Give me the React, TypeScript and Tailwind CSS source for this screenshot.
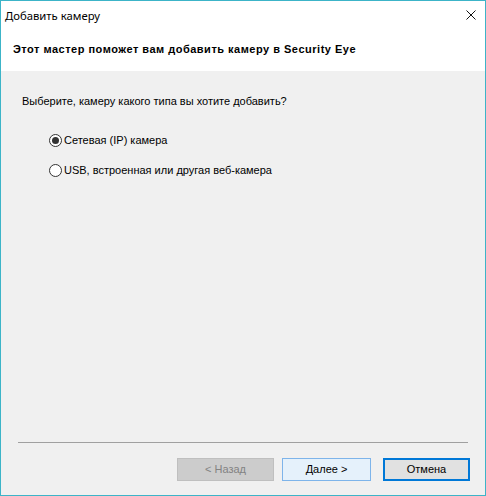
import { useState } from "react";

const ui = { fontFamily: '"Liberation Sans", Arial, sans-serif' };
const title = { fontFamily: '"Segoe UI", "Noto Sans", "Open Sans", sans-serif' };

function Radio({ checked, label, onClick }: { checked: boolean; label: string; onClick: () => void }) {
  return (
    <button type="button" onClick={onClick} className="flex items-center gap-[2px] h-[14px] text-left">
      <span className="flex h-[13px] w-[13px] items-center justify-center rounded-full border border-[#333333] bg-white">
        {checked && <span className="h-[7px] w-[7px] rounded-full bg-[#333333]" />}
      </span>
      <span className="text-[11px] leading-[13px] text-black">{label}</span>
    </button>
  );
}

export default function App() {
  const [type, setType] = useState<"ip" | "usb">("ip");

  return (
    <div className="flex h-[496px] w-[486px] flex-col border border-[#3cb4c8] bg-white" style={ui}>
      {/* title bar */}
      <div className="flex h-[29px] shrink-0 items-center justify-between pl-[4px] pr-[9px]">
        <span className="text-[11.3px] leading-[16px] text-black" style={title}>
          Добавить камеру
        </span>
        <svg width="10" height="10" viewBox="0 0 10 10" className="mt-[-2px]">
          <path d="M0.5 0.5 L9.5 9.5 M9.5 0.5 L0.5 9.5" stroke="#111" strokeWidth="1" />
        </svg>
      </div>

      {/* header */}
      <div className="flex h-[41px] shrink-0 items-center px-[12px] pb-[2px]">
        <span className="text-[11px] font-bold leading-[13px] tracking-[0.5px] text-black">
          Этот мастер поможет вам добавить камеру в Security Eye
        </span>
      </div>

      {/* body */}
      <div className="flex flex-1 flex-col bg-[#f0f0f0]">
        <div className="flex flex-1 flex-col px-[21px] pt-[24px]">
          <span className="text-[11px] leading-[13px] text-black">
            Выберите, камеру какого типа вы хотите добавить?
          </span>
          <div className="mt-[25px] flex flex-col gap-[16px] pl-[27px]">
            <Radio checked={type === "ip"} label="Сетевая (IP) камера" onClick={() => setType("ip")} />
            <Radio checked={type === "usb"} label="USB, встроенная или другая веб-камера" onClick={() => setType("usb")} />
          </div>
        </div>

        <div className="mx-[17px] h-px bg-[#a0a0a0]" />

        <div className="flex h-[52px] items-start justify-end pr-[15px] pt-[15px]">
          <button
            type="button"
            disabled
            className="h-[23px] w-[97px] border border-[#bfbfbf] bg-[#cccccc] text-[11px] text-[#838383]"
          >
            &lt; Назад
          </button>
          <button
            type="button"
            className="ml-[8px] h-[23px] w-[89px] border border-[#7eb4ea] bg-[#e5f1fb] text-[11px] text-black"
          >
            Далее &gt;
          </button>
          <button
            type="button"
            className="ml-[12px] h-[23px] w-[87px] border-2 border-[#0078d7] bg-[#e1e1e1] text-[11px] text-black"
          >
            Отмена
          </button>
        </div>
      </div>
    </div>
  );
}
